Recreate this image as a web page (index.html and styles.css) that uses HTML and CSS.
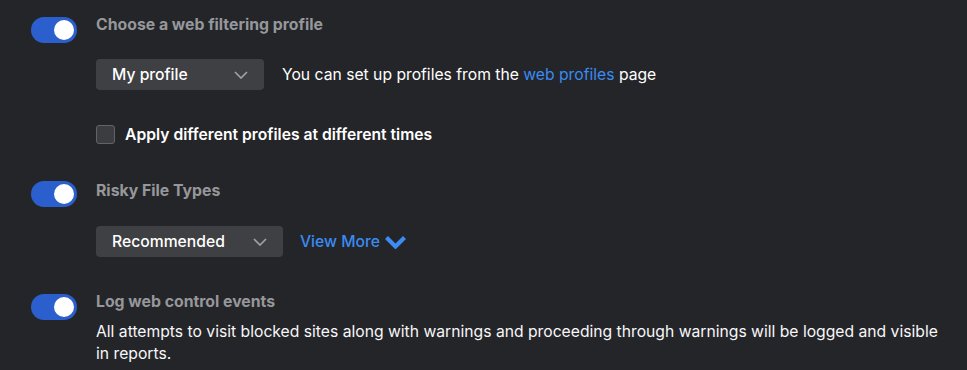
FILE: index.html
```html
<!DOCTYPE html>
<html>
<head>
    <title>Web Control Settings</title>
    <link rel="stylesheet" href="styles.css">
</head>
<body>
    <div class="settings">

        <div class="setting first">
            <span class="toggle on"><span class="knob"></span></span>
            <div class="content">
                <h3>Choose a web filtering profile</h3>
                <div class="select-row">
                    <div class="select profile-select">
                        <span>My profile</span>
                        <svg class="caret" width="14" height="8" viewBox="0 0 14 8"><path d="M1 1l6 6 6-6" fill="none" stroke="#a3a4a7" stroke-width="1.6"/></svg>
                    </div>
                    <p class="hint">You can set up profiles from the <a href="#">web profiles</a> page</p>
                </div>
                <label class="check">
                    <span class="box"></span>
                    Apply different profiles at different times
                </label>
            </div>
        </div>

        <div class="setting second">
            <span class="toggle on"><span class="knob"></span></span>
            <div class="content">
                <h3>Risky File Types</h3>
                <div class="select-row">
                    <div class="select type-select">
                        <span>Recommended</span>
                        <svg class="caret" width="14" height="8" viewBox="0 0 14 8"><path d="M1 1l6 6 6-6" fill="none" stroke="#a3a4a7" stroke-width="1.6"/></svg>
                    </div>
                    <a href="#" class="view-more">View More
                        <svg width="23" height="14" viewBox="0 0 23 14"><path d="M2.5 2.5l9 9 9-9" fill="none" stroke="#3d8cf5" stroke-width="4.2" stroke-linejoin="miter"/></svg>
                    </a>
                </div>
            </div>
        </div>

        <div class="setting third">
            <span class="toggle on"><span class="knob"></span></span>
            <div class="content">
                <h3>Log web control events</h3>
                <p class="desc">All attempts to visit blocked sites along with warnings and proceeding through warnings will be logged and visible in reports.</p>
            </div>
        </div>

    </div>
</body>
</html>
```

FILE: styles.css
```css
body {
    margin: 0;
    background: #242528;
    font-family: Inter, "Noto Sans", sans-serif;
    font-size: 15.7px;
    color: #f4f4f5;
}
.settings {
    padding: 14px 19px 0 31px;
}
.setting {
    display: flex;
    align-items: flex-start;
    gap: 19px;
}
.second {
    margin-top: 36px;
}
.third {
    margin-top: 34px;
}
.toggle {
    flex: none;
    width: 46px;
    height: 26px;
    border-radius: 13px;
    background: #2b5fce;
    position: relative;
    margin-top: 3px;
}
.second .toggle {
    margin-top: 1px;
}
.knob {
    position: absolute;
    top: 3px;
    right: 3px;
    width: 20px;
    height: 20px;
    border-radius: 50%;
    background: #fff;
}
.content {
    flex: 1;
}
h3 {
    margin: 0;
    font-size: 15.8px;
    line-height: 22px;
    font-weight: 700;
    color: #96979b;
}
.select-row {
    display: flex;
    align-items: center;
    margin-top: 23px;
}
.second .select-row {
    margin-top: 24px;
}
.select {
    display: flex;
    align-items: center;
    justify-content: space-between;
    box-sizing: border-box;
    height: 31px;
    padding: 0 16px;
    background: #3f4043;
    border-radius: 4px;
    color: #fff;
    font-weight: 500;
}
.profile-select {
    width: 168px;
}
.type-select {
    width: 187px;
}
.caret {
    display: block;
}
.hint {
    margin: 0 0 0 18px;
    color: #fff;
}
a {
    color: #3a8bf2;
    text-decoration: none;
}
.view-more {
    display: flex;
    align-items: center;
    gap: 4px;
    margin-left: 17px;
    font-weight: 500;
}
.view-more svg {
    display: block;
}
.check {
    display: flex;
    align-items: center;
    gap: 10px;
    margin-top: 35px;
    font-weight: 600;
    color: #fff;
}
.box {
    box-sizing: border-box;
    width: 19px;
    height: 19px;
    border: 1px solid #626367;
    border-radius: 3px;
    background: #3c3d40;
}
.desc {
    margin: 8px 0 0;
    line-height: 22px;
    color: #f7f7f8;
}
```
